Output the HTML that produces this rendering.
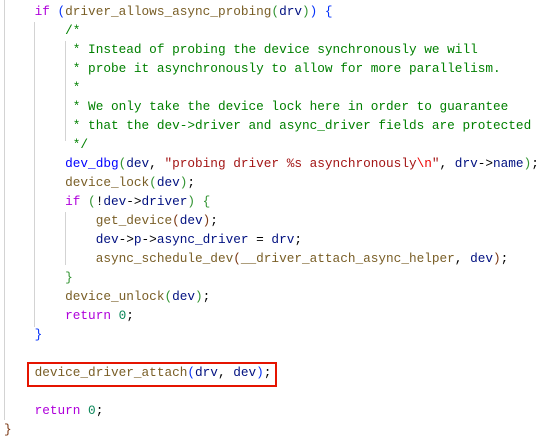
<!DOCTYPE html>
<html><head><style>
body{margin:0;width:543px;height:440px;background:#fff;overflow:hidden;position:relative;font-family:"Liberation Mono","DejaVu Sans Mono","Courier New",Courier,monospace;font-size:12.75px;}
.l{position:absolute;left:4px;height:19px;line-height:19px;white-space:pre;color:#000;}
.ch{display:inline-block;width:7.65px;text-align:center;}
.k{color:#af00db}.f{color:#795e26}.m{color:#0000ff}.v{color:#001080}.c{color:#008000}.n{color:#098658}.s{color:#a31515}.e{color:#ee0000}.b1{color:#0431fa}.b2{color:#319331}.b3{color:#7b3814}
.g{position:absolute;width:1px;background:#d3d3d3}
.box{position:absolute;left:27px;top:362px;width:246px;height:21px;border:2px solid #e51400;}
</style></head><body>
<div class="g" style="left:4px;top:0;height:420px"></div>
<div class="g" style="left:34px;top:22px;height:305px"></div>
<div class="g" style="left:65px;top:41px;height:100px"></div>
<div class="g" style="left:65px;top:212px;height:53px"></div>
<div class="l" style="top:2px">    <span class="k">if</span> <span class="b1">(</span><span class="f">driver_allows_async_probing</span><span class="b2">(</span><span class="v">drv</span><span class="b2">)</span><span class="b1">)</span> <span class="b1">{</span></div>
<div class="l c" style="top:21px">        /*</div>
<div class="l c" style="top:40px">         * Instead of probing the device synchronously we will</div>
<div class="l c" style="top:59px">         * probe it asynchronously to allow for more parallelism.</div>
<div class="l c" style="top:78px">         *</div>
<div class="l c" style="top:97px">         * We only take the device lock here in order to guarantee</div>
<div class="l c" style="top:116px">         * that the dev-&gt;driver and async_driver fields are protected</div>
<div class="l c" style="top:135px">         */</div>
<div class="l" style="top:154px">        <span class="m">dev_dbg</span><span class="b2">(</span><span class="v">dev</span>, <span class="s">"probing driver %s asynchronously</span><span class="e">\n</span><span class="s">"</span>, <span class="v">drv</span>-&gt;<span class="v">name</span><span class="b2">)</span>;</div>
<div class="l" style="top:173px">        <span class="f">device_lock</span><span class="b2">(</span><span class="v">dev</span><span class="b2">)</span>;</div>
<div class="l" style="top:192px">        <span class="k">if</span> <span class="b2">(</span>!<span class="v">dev</span>-&gt;<span class="v">driver</span><span class="b2">)</span> <span class="b2">{</span></div>
<div class="l" style="top:211px">            <span class="f">get_device</span><span class="b3">(</span><span class="v">dev</span><span class="b3">)</span>;</div>
<div class="l" style="top:230px">            <span class="v">dev</span>-&gt;<span class="v">p</span>-&gt;<span class="v">async_driver</span> = <span class="v">drv</span>;</div>
<div class="l" style="top:249px">            <span class="f">async_schedule_dev</span><span class="b3">(</span><span class="f">__driver_attach_async_helper</span>, <span class="v">dev</span><span class="b3">)</span>;</div>
<div class="l" style="top:268px">        <span class="b2">}</span></div>
<div class="l" style="top:287px">        <span class="f">device_unlock</span><span class="b2">(</span><span class="v">dev</span><span class="b2">)</span>;</div>
<div class="l" style="top:306px">        <span class="k">return</span> <span class="n">0</span>;</div>
<div class="l" style="top:325px">    <span class="b1">}</span></div>
<div class="l" style="top:363px">    <span class="f">device_driver_attach</span><span class="b1">(</span><span class="v">drv</span>, <span class="v">dev</span><span class="b1">)</span>;</div>
<div class="l" style="top:401px">    <span class="k">return</span> <span class="n">0</span>;</div>
<div class="l" style="top:420px"><span class="b3">}</span></div>
<div class="box"></div>
<script>
(function(){
var w=document.createTreeWalker(document.body,NodeFilter.SHOW_TEXT,null,false),nodes=[],n;
while(n=w.nextNode()){if(n.parentNode.closest&&n.parentNode.closest('.l'))nodes.push(n);}
nodes.forEach(function(t){var f=document.createDocumentFragment();var s=t.nodeValue;
for(var i=0;i<s.length;i++){var sp=document.createElement('span');sp.className='ch';sp.textContent=s[i]===' '?'\u00a0':s[i];f.appendChild(sp);}
t.parentNode.replaceChild(f,t);});
})();
</script>
</body></html>
